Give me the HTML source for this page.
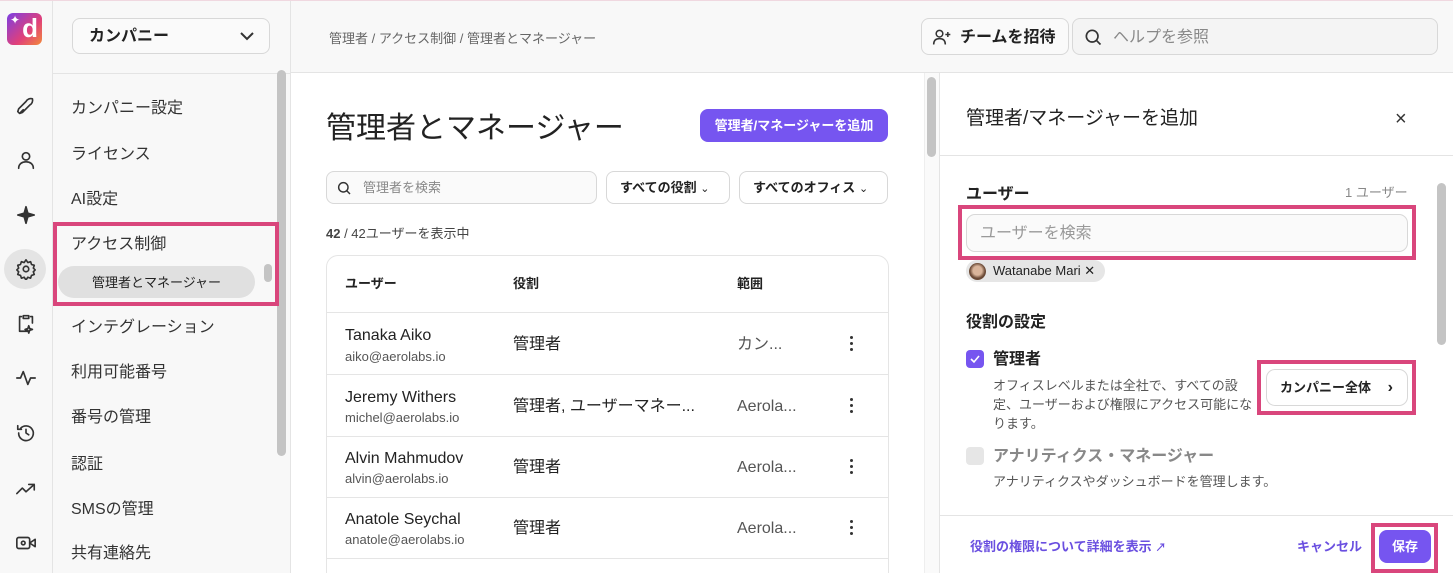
<!DOCTYPE html>
<html><head><meta charset="utf-8"><style>
*{box-sizing:border-box;margin:0;padding:0}
html,body{width:1453px;height:573px;overflow:hidden}
body{position:relative;background:#fff;font-family:"Liberation Sans","Noto Sans CJK JP",sans-serif;color:#222;line-height:1.25}
.a{position:absolute}
.t{margin-top:2px}
.nav{left:71px;font-size:16px;color:#333;white-space:nowrap;line-height:20px;margin-top:3px}
.hl{border:4px solid #d9467c;position:absolute}
.ic{position:absolute;left:15px;width:22px;height:22px;fill:none;stroke:#333;stroke-width:1.8;stroke-linecap:round;stroke-linejoin:round}
.row{position:absolute;left:327px;width:561px;border-top:1px solid #e5e5e5}
.nm{position:absolute;left:18px;font-size:16px;color:#222;line-height:20px}
.em{position:absolute;left:18px;font-size:13px;color:#555;line-height:16px}
.rl{position:absolute;left:186px;font-size:16px;color:#222;line-height:20px}
.sc{position:absolute;left:410px;font-size:16px;color:#555;line-height:20px}
.dots{position:absolute;left:523px;width:4px}
.dots i{display:block;width:3px;height:3px;background:#333;border-radius:50%;margin-bottom:3px}
</style></head><body>
<div class="a" style="left:0;top:0;width:1453px;height:1px;background:#f0d8e0"></div>
<!-- rail -->
<div class="a" style="left:0;top:1px;width:53px;height:572px;background:#f8f8f8;border-right:1px solid #e4e4e4"></div>
<div class="a" style="left:7px;top:13px;width:35px;height:32px;border-radius:6px;background:linear-gradient(135deg,#7b3fe4,#e0407a 60%,#f28a3a);color:#fff;font-weight:bold;font-size:26px;line-height:30px;text-align:right;padding-right:4px">d</div>
<div class="a" style="left:10px;top:13px;color:#fff;font-size:12px">✦</div>
<div class="a" style="left:4px;top:249px;width:42px;height:40px;border-radius:50%;background:#e4e4e4"></div>
<svg class="ic" style="top:96px" viewBox="0 0 24 24"><path d="M5 19l3-1 8-8a6 6 0 003-7 6 6 0 00-7 3l-8 8-1 3z M9 15l-3 3"/></svg>
<svg class="ic" style="top:149px" viewBox="0 0 24 24"><circle cx="12" cy="8" r="4"/><path d="M4 21c0-5 4-7 8-7s8 2 8 7"/></svg>
<svg class="ic" style="top:204px" viewBox="0 0 24 24"><path d="M12 3l2 7 7 2-7 2-2 7-2-7-7-2 7-2z" fill="#333"/></svg>
<svg class="ic" style="top:258px" viewBox="0 0 24 24"><circle cx="12" cy="12" r="3"/><path d="M12 2l2 3 3-1 1 3 3 1-1 3 2 2-2 2 1 3-3 1-1 3-3-1-2 3-2-3-3 1-1-3-3-1 1-3-2-2 2-2-1-3 3-1 1-3 3 1z"/></svg>
<svg class="ic" style="top:312px" viewBox="0 0 24 24"><path d="M9 4h6v3H9z M7 5H5v16h8 M17 5h2v7 M15 15l1 3 3 1-3 1-1 3-1-3-3-1 3-1z"/></svg>
<svg class="ic" style="top:367px" viewBox="0 0 24 24"><path d="M2 12h4l3-7 5 14 3-7h5"/></svg>
<svg class="ic" style="top:422px" viewBox="0 0 24 24"><path d="M4 12a8 8 0 102-5 M3 4v4h4 M12 8v4l3 2"/></svg>
<svg class="ic" style="top:478px" viewBox="0 0 24 24"><path d="M2 17l6-6 4 4 9-8 M15 7h6v6"/></svg>
<svg class="ic" style="top:532px" viewBox="0 0 24 24"><rect x="2" y="6" width="14" height="12" rx="2"/><path d="M16 12l6-4v8z"/><circle cx="9" cy="12" r="2"/></svg>
<!-- sidebar -->
<div class="a" style="left:53px;top:1px;width:238px;height:572px;background:#f8f8f8;border-right:1px solid #e4e4e4"></div>
<div class="a" style="left:53px;top:73px;width:237px;height:1px;background:#e4e4e4"></div>
<div class="a" style="left:72px;top:18px;width:198px;height:36px;border:1px solid #d8d8d8;border-radius:8px;background:#fafafa;font-size:16px;font-weight:bold;line-height:36px;padding-left:16px">カンパニー<svg style="position:absolute;right:14px;top:11px" width="16" height="12" viewBox="0 0 16 12"><path d="M2 3l6 6 6-6" fill="none" stroke="#333" stroke-width="2"/></svg></div>
<div class="a" style="left:277px;top:70px;width:9px;height:386px;border-radius:5px;background:#c4c4c4"></div>
<div class="a nav" style="top:96px">カンパニー設定</div>
<div class="a nav" style="top:142px">ライセンス</div>
<div class="a nav" style="top:187px">AI設定</div>
<div class="a nav" style="top:232px">アクセス制御</div>
<div class="a" style="left:58px;top:266px;width:197px;height:32px;border-radius:16px;background:#e0e0e0;font-size:13px;text-align:center;line-height:33px;color:#222">管理者とマネージャー</div>
<div class="a" style="left:264px;top:264px;width:8px;height:18px;border-radius:4px;background:#c4c4c4"></div>
<div class="hl" style="left:53px;top:222px;width:226px;height:84px"></div>
<div class="a nav" style="top:315px">インテグレーション</div>
<div class="a nav" style="top:360px">利用可能番号</div>
<div class="a nav" style="top:405px">番号の管理</div>
<div class="a nav" style="top:452px">認証</div>
<div class="a nav" style="top:497px">SMSの管理</div>
<div class="a nav" style="top:541px">共有連絡先</div>
<!-- header -->
<div class="a" style="left:291px;top:1px;width:1162px;height:72px;background:#f8f8f8;border-bottom:1px solid #e4e4e4"></div>
<div class="a t" style="left:329px;top:29px;font-size:13px;line-height:16px;color:#666">管理者 / アクセス制御 / 管理者とマネージャー</div>
<div class="a" style="left:921px;top:18px;width:148px;height:37px;border:1px solid #d8d8d8;border-radius:8px;background:#fafafa;font-size:16px;font-weight:bold;line-height:37px;padding-left:38px">チームを招待
<svg style="position:absolute;left:10px;top:8px" width="20" height="20" viewBox="0 0 24 24" fill="none" stroke="#333" stroke-width="1.8"><circle cx="9" cy="8" r="4"/><path d="M2 21c0-5 3-7 7-7s7 2 7 7 M19 6v6 M16 9h6"/></svg></div>
<div class="a" style="left:1072px;top:18px;width:366px;height:37px;border:1px solid #d8d8d8;border-radius:8px;background:#f4f4f4;font-size:16px;color:#888;line-height:37px;padding-left:40px">ヘルプを参照
<svg style="position:absolute;left:10px;top:8px" width="20" height="20" viewBox="0 0 24 24" fill="none" stroke="#333" stroke-width="2"><circle cx="11" cy="11" r="7"/><path d="M16 16l5 5"/></svg></div>
<!-- main -->
<div class="a" style="left:326px;top:110px;font-size:30px;line-height:38px;color:#222">管理者とマネージャー</div>
<div class="a" style="left:700px;top:109px;width:188px;height:33px;border-radius:8px;background:#7655f0;color:#fff;font-size:13px;font-weight:bold;text-align:center;line-height:33px">管理者/マネージャーを追加</div>
<div class="a" style="left:326px;top:171px;width:271px;height:33px;border:1px solid #d8d8d8;border-radius:8px;background:#fafafa;font-size:13px;color:#888;line-height:31px;padding-left:36px">管理者を検索
<svg style="position:absolute;left:9px;top:8px" width="16" height="16" viewBox="0 0 24 24" fill="none" stroke="#333" stroke-width="2.2"><circle cx="11" cy="11" r="7"/><path d="M16 16l5 5"/></svg></div>
<div class="a" style="left:606px;top:171px;width:124px;height:33px;border:1px solid #d8d8d8;border-radius:8px;font-size:13px;font-weight:bold;line-height:31px;padding-left:13px">すべての役割 <span style="font-weight:normal;font-size:11px">⌄</span></div>
<div class="a" style="left:739px;top:171px;width:149px;height:33px;border:1px solid #d8d8d8;border-radius:8px;font-size:13px;font-weight:bold;line-height:31px;padding-left:13px">すべてのオフィス <span style="font-weight:normal;font-size:11px">⌄</span></div>
<div class="a t" style="left:326px;top:224px;font-size:13px;line-height:16px;color:#444"><b>42</b> / 42ユーザーを表示中</div>
<div class="a" style="left:326px;top:255px;width:563px;height:318px;border:1px solid #e5e5e5;border-bottom:none;border-radius:12px 12px 0 0"></div>
<div class="a t" style="left:345px;top:274px;font-size:13px;line-height:16px;font-weight:bold">ユーザー</div>
<div class="a t" style="left:513px;top:274px;font-size:13px;line-height:16px;font-weight:bold">役割</div>
<div class="a t" style="left:737px;top:274px;font-size:13px;line-height:16px;font-weight:bold">範囲</div>
<div class="row" style="top:312px;height:62px"><div class="nm" style="top:13px">Tanaka Aiko</div><div class="em" style="top:36px">aiko@aerolabs.io</div><div class="rl" style="top:22px">管理者</div><div class="sc" style="top:22px">カン...</div><div class="dots" style="top:23px"><i></i><i></i><i></i></div></div>
<div class="row" style="top:374px;height:62px"><div class="nm" style="top:13px">Jeremy Withers</div><div class="em" style="top:35px">michel@aerolabs.io</div><div class="rl" style="top:22px">管理者, ユーザーマネー...</div><div class="sc" style="top:22px">Aerola...</div><div class="dots" style="top:23px"><i></i><i></i><i></i></div></div>
<div class="row" style="top:436px;height:61px"><div class="nm" style="top:12px">Alvin Mahmudov</div><div class="em" style="top:34px">alvin@aerolabs.io</div><div class="rl" style="top:21px">管理者</div><div class="sc" style="top:21px">Aerola...</div><div class="dots" style="top:22px"><i></i><i></i><i></i></div></div>
<div class="row" style="top:497px;height:61px"><div class="nm" style="top:12px">Anatole Seychal</div><div class="em" style="top:34px">anatole@aerolabs.io</div><div class="rl" style="top:21px">管理者</div><div class="sc" style="top:21px">Aerola...</div><div class="dots" style="top:22px"><i></i><i></i><i></i></div></div>
<div class="row" style="top:558px;height:15px"></div>
<!-- main scrollbar -->
<div class="a" style="left:924px;top:73px;width:16px;height:500px;background:#fafafa;border-left:1px solid #eee;border-right:1px solid #e4e4e4"></div>
<div class="a" style="left:927px;top:77px;width:9px;height:80px;border-radius:5px;background:#c4c4c4"></div>
<!-- panel -->
<div class="a t" style="left:966px;top:105px;font-size:19px;line-height:24px;color:#222">管理者/マネージャーを追加</div>
<div class="a t" style="left:1395px;top:105px;font-size:20px;line-height:24px;color:#333">×</div>
<div class="a" style="left:940px;top:155px;width:513px;height:1px;background:#e4e4e4"></div>
<div class="a" style="left:1437px;top:183px;width:9px;height:162px;border-radius:5px;background:#c4c4c4"></div>
<div class="a t" style="left:966px;top:183px;font-size:16px;line-height:20px;font-weight:bold">ユーザー</div>
<div class="a t" style="left:1345px;top:183px;font-size:13px;line-height:16px;color:#888">1 ユーザー</div>
<div class="a" style="left:966px;top:214px;width:442px;height:38px;border:1px solid #d8d8d8;border-radius:9px;background:#fafafa;font-size:16px;color:#999;line-height:37px;padding-left:13px">ユーザーを検索</div>
<div class="hl" style="left:958px;top:205px;width:458px;height:55px"></div>
<div class="a" style="left:966px;top:260px;width:139px;height:22px;border-radius:11px;background:#e6e6e6;font-size:13px;line-height:22px;padding-left:27px">Watanabe Mari ✕</div>
<div class="a" style="left:969px;top:263px;width:17px;height:17px;border-radius:50%;background:radial-gradient(circle at 50% 45%,#d9b49a 35%,#6b4a36 60%)"></div>
<div class="a t" style="left:966px;top:311px;font-size:16px;line-height:20px;font-weight:bold">役割の設定</div>
<div class="a" style="left:966px;top:350px;width:18px;height:18px;border-radius:4px;background:#7655f0"><svg width="18" height="18" viewBox="0 0 18 18"><path d="M5 9l3 3 5-6" fill="none" stroke="#fff" stroke-width="1.6"/></svg></div>
<div class="a t" style="left:993px;top:348px;font-size:16px;line-height:20px;font-weight:bold">管理者</div>
<div class="a t" style="left:993px;top:374px;width:265px;font-size:13px;line-height:19px;color:#555">オフィスレベルまたは全社で、すべての設定、ユーザーおよび権限にアクセス可能になります。</div>
<div class="a" style="left:1266px;top:369px;width:142px;height:37px;border:1px solid #d8d8d8;border-radius:9px;font-size:13px;font-weight:bold;line-height:35px;padding-left:13px">カンパニー全体 <span style="position:absolute;right:14px;font-size:16px">›</span></div>
<div class="hl" style="left:1257px;top:360px;width:159px;height:55px"></div>
<div class="a" style="left:966px;top:447px;width:18px;height:18px;border-radius:4px;background:#e6e6e6"></div>
<div class="a t" style="left:993px;top:445px;font-size:16px;line-height:20px;font-weight:bold;color:#888">アナリティクス・マネージャー</div>
<div class="a t" style="left:993px;top:472px;font-size:13px;line-height:16px;color:#555">アナリティクスやダッシュボードを管理します。</div>
<div class="a" style="left:940px;top:515px;width:513px;height:1px;background:#e4e4e4"></div>
<div class="a t" style="left:970px;top:537px;font-size:13px;line-height:16px;font-weight:bold;color:#6a4fe0">役割の権限について詳細を表示 <span style="font-size:11px">↗</span></div>
<div class="a t" style="left:1297px;top:537px;font-size:13px;line-height:16px;font-weight:bold;color:#6a4fe0">キャンセル</div>
<div class="a" style="left:1379px;top:530px;width:52px;height:33px;border-radius:8px;background:#7655f0;color:#fff;font-size:13px;font-weight:bold;text-align:center;line-height:33px">保存</div>
<div class="hl" style="left:1371px;top:523px;width:67px;height:50px"></div>
</body></html>
